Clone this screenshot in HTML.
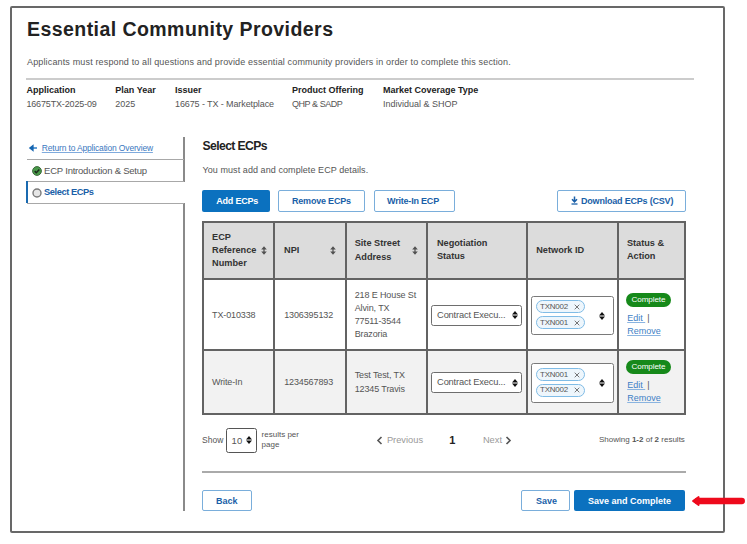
<!DOCTYPE html>
<html><head><meta charset="utf-8">
<style>
*{margin:0;padding:0;box-sizing:border-box}
html,body{width:747px;height:544px;background:#fff;overflow:hidden;font-family:"Liberation Sans",sans-serif}
.t{position:absolute;white-space:nowrap;line-height:1}
.b{font-weight:bold}
.box{position:absolute}
</style></head><body>
<!-- frame -->
<div class="box" style="left:10px;top:6px;width:715px;height:527px;border:2px solid #686868;border-radius:2px"></div>

<div id="title" class="t b" style="left:27px;top:19.5px;font-size:19.5px;color:#222;letter-spacing:0.44px">Essential Community Providers</div>
<div id="sub" class="t" style="left:27px;top:58.2px;font-size:9px;color:#555;letter-spacing:0.15px">Applicants must respond to all questions and provide essential community providers in order to complete this section.</div>
<div class="box" style="left:26px;top:78px;width:668px;height:2px;background:#ccc"></div>

<div id="m1" class="t b" style="left:26.4px;top:86.3px;font-size:9px;color:#222">Application</div>
<div id="v1" class="t" style="left:26.4px;top:99.6px;font-size:9px;color:#555;letter-spacing:-0.15px">16675TX-2025-09</div>
<div id="m2" class="t b" style="left:115.3px;top:86.3px;font-size:9px;color:#222">Plan Year</div>
<div id="v2" class="t" style="left:115.3px;top:99.6px;font-size:9px;color:#555">2025</div>
<div id="m3" class="t b" style="left:175px;top:86.3px;font-size:9px;color:#222">Issuer</div>
<div id="v3" class="t" style="left:175px;top:99.6px;font-size:9px;color:#555;letter-spacing:-0.1px">16675 - TX - Marketplace</div>
<div id="m4" class="t b" style="left:292px;top:86.3px;font-size:9px;color:#222">Product Offering</div>
<div id="v4" class="t" style="left:292px;top:99.6px;font-size:9px;color:#555;letter-spacing:-0.45px">QHP &amp; SADP</div>
<div id="m5" class="t b" style="left:383px;top:86.3px;font-size:9px;color:#222">Market Coverage Type</div>
<div id="v5" class="t" style="left:383px;top:99.6px;font-size:9px;color:#555">Individual &amp; SHOP</div>

<!-- sidebar -->
<div class="box" style="left:183.3px;top:137px;width:1.6px;height:44.5px;background:#8a8a8a"></div>
<div class="box" style="left:183.3px;top:203px;width:1.6px;height:308px;background:#8a8a8a"></div>
<div class="box" style="left:27px;top:158.5px;width:157px;height:1.5px;background:#a8a8a8"></div>
<div class="box" style="left:27px;top:180.5px;width:157px;height:1.5px;background:#a8a8a8"></div>
<div class="box" style="left:27px;top:202.5px;width:157px;height:1.5px;background:#a8a8a8"></div>
<div class="box" style="left:26px;top:181px;width:2px;height:22px;background:#1a6ab0"></div>
<svg class="box" style="left:28px;top:143px" width="10" height="10" viewBox="0 0 10 10"><path d="M9 5H4" stroke="#3b86cc" stroke-width="1.6"/><path d="M5.6 1.2L0.8 5L5.6 8.8Z" fill="#1565b0"/></svg>
<div id="s1" class="t" style="left:41.8px;top:143.9px;font-size:8.5px;letter-spacing:-0.17px;color:#3a78c0;text-decoration:underline;text-decoration-color:#7faadc">Return to Application Overview</div>
<svg class="box" style="left:32px;top:166px" width="10" height="10" viewBox="0 0 10 10"><circle cx="5" cy="5" r="4.4" fill="#4a9a4a" stroke="#3d6b3d" stroke-width="1"/><path d="M2.7 5.1L4.3 6.7L7.3 3.6" stroke="#1b2a1b" stroke-width="1.5" fill="none"/></svg>
<div id="s2" class="t" style="left:44.1px;top:166.2px;font-size:9.5px;letter-spacing:-0.22px;color:#555">ECP Introduction &amp; Setup</div>
<svg class="box" style="left:32px;top:188px" width="10" height="10" viewBox="0 0 10 10"><circle cx="5" cy="5" r="4" fill="#e6e6e6" stroke="#7a7a7a" stroke-width="1.4"/></svg>
<div id="s3" class="t b" style="left:44.1px;top:188.1px;font-size:9.3px;letter-spacing:-0.45px;color:#1a5fa8">Select ECPs</div>

<!-- main -->
<div id="h2" class="t b" style="left:202.5px;top:139.5px;font-size:12.2px;letter-spacing:-0.6px;color:#222">Select ECPs</div>
<div id="p1" class="t" style="left:202.5px;top:165.8px;font-size:9px;color:#555;letter-spacing:0.07px">You must add and complete ECP details.</div>


<!-- buttons -->
<div class="box" style="left:202px;top:190px;width:67.5px;height:22px;background:#0b71bf;border-radius:2px"></div>
<div id="bt1" class="t b" style="left:216.2px;top:196.5px;font-size:9px;color:#fff;letter-spacing:-0.2px">Add ECPs</div>
<div class="box" style="left:278px;top:190px;width:87px;height:22px;border:1.8px solid #7aaedb;border-radius:2px"></div>
<div id="bt2" class="t b" style="left:292px;top:196.5px;font-size:9px;color:#1a5fa8;letter-spacing:-0.2px">Remove ECPs</div>
<div class="box" style="left:373.5px;top:190px;width:81px;height:22px;border:1.8px solid #7aaedb;border-radius:2px"></div>
<div id="bt3" class="t b" style="left:387px;top:196.5px;font-size:9px;color:#1a5fa8;letter-spacing:-0.2px">Write-In ECP</div>
<div class="box" style="left:557px;top:190px;width:128.5px;height:22px;border:1.8px solid #7aaedb;border-radius:2px"></div>
<div id="bt4" class="t b" style="left:581px;top:196.5px;font-size:9px;color:#1a5fa8;letter-spacing:-0.2px">Download ECPs (CSV)</div>

<svg class="box" style="left:570.5px;top:196px" width="7" height="9" viewBox="0 0 7 9"><path d="M3.5 0.5V5.5M1 3.2L3.5 5.8L6 3.2" stroke="#1a5fa8" stroke-width="1.5" fill="none"/><path d="M0.5 8H6.5" stroke="#1a5fa8" stroke-width="1.3"/></svg>
<!-- table -->
<div class="box" style="left:202px;top:221px;width:483.5px;height:57.5px;background:#dcdcdc"></div>
<div class="box" style="left:202px;top:349.5px;width:483.5px;height:64px;background:#f2f2f2"></div>
<div class="box" style="left:202px;top:220.5px;width:484px;height:194px;border:2px solid #636363"></div>
<div class="box" style="left:202px;top:277.5px;width:484px;height:2px;background:#636363"></div>
<div class="box" style="left:202px;top:348.7px;width:484px;height:2px;background:#636363"></div>
<div class="box" style="left:272.8px;top:221px;width:2px;height:193px;background:#636363"></div>
<div class="box" style="left:344.8px;top:221px;width:2px;height:193px;background:#636363"></div>
<div class="box" style="left:425.6px;top:221px;width:2px;height:193px;background:#636363"></div>
<div class="box" style="left:525.8px;top:221px;width:2px;height:193px;background:#636363"></div>
<div class="box" style="left:616.5px;top:221px;width:2px;height:193px;background:#636363"></div>
<div id="th1a" class="t b" style="left:212px;top:232.9px;font-size:9.2px;color:#333;">ECP</div>
<div id="th1b" class="t b" style="left:212px;top:246.3px;font-size:9.2px;color:#333;">Reference</div>
<div id="th1c" class="t b" style="left:212px;top:259.4px;font-size:9.2px;color:#333;">Number</div>
<div id="th2" class="t b" style="left:284px;top:246.3px;font-size:9.2px;color:#333;">NPI</div>
<div id="th3a" class="t b" style="left:354.7px;top:239.4px;font-size:9.2px;color:#333;">Site Street</div>
<div id="th3b" class="t b" style="left:354.7px;top:252.5px;font-size:9.2px;color:#333;">Address</div>
<div id="th4a" class="t b" style="left:436.9px;top:239.3px;font-size:9.2px;color:#333;">Negotiation</div>
<div id="th4b" class="t b" style="left:436.9px;top:252.4px;font-size:9.2px;color:#333;">Status</div>
<div id="th5" class="t b" style="left:536.2px;top:246.4px;font-size:9.2px;color:#333;">Network ID</div>
<div id="th6a" class="t b" style="left:626.9px;top:239.3px;font-size:9.2px;color:#333;">Status &amp;</div>
<div id="th6b" class="t b" style="left:626.9px;top:252.4px;font-size:9.2px;color:#333;">Action</div>
<svg class="box" style="left:260.9px;top:245.5px" width="6" height="9" viewBox="0 0 6 9"><path d="M3 0.3L5.8 3.6H3.6V5.4H5.8L3 8.7L0.2 5.4H2.4V3.6H0.2Z" fill="#505050"/></svg>
<svg class="box" style="left:329.5px;top:245.5px" width="6" height="9" viewBox="0 0 6 9"><path d="M3 0.3L5.8 3.6H3.6V5.4H5.8L3 8.7L0.2 5.4H2.4V3.6H0.2Z" fill="#505050"/></svg>
<svg class="box" style="left:412.4px;top:245.5px" width="6" height="9" viewBox="0 0 6 9"><path d="M3 0.3L5.8 3.6H3.6V5.4H5.8L3 8.7L0.2 5.4H2.4V3.6H0.2Z" fill="#505050"/></svg>
<div id="r1c1" class="t" style="left:212px;top:310.8px;font-size:9px;color:#555;letter-spacing:-0.12px;">TX-010338</div>
<div id="r1c2" class="t" style="left:284.2px;top:310.8px;font-size:9px;color:#555;letter-spacing:-0.12px;">1306395132</div>
<div id="r1a0" class="t" style="left:354.7px;top:291.0px;font-size:9px;color:#555;letter-spacing:-0.12px;">218 E House St</div>
<div id="r1a1" class="t" style="left:354.7px;top:304.1px;font-size:9px;color:#555;letter-spacing:-0.12px;">Alvin, TX</div>
<div id="r1a2" class="t" style="left:354.7px;top:317.2px;font-size:9px;color:#555;letter-spacing:-0.12px;">77511-3544</div>
<div id="r1a3" class="t" style="left:354.7px;top:330.3px;font-size:9px;color:#555;letter-spacing:-0.12px;">Brazoria</div>
<div id="r2c1" class="t" style="left:212px;top:377.9px;font-size:9px;color:#555;letter-spacing:-0.12px;">Write-In</div>
<div id="r2c2" class="t" style="left:284.2px;top:377.9px;font-size:9px;color:#555;letter-spacing:-0.12px;">1234567893</div>
<div id="r2a0" class="t" style="left:354.7px;top:371.4px;font-size:9px;color:#555;letter-spacing:-0.12px;">Test Test, TX</div>
<div id="r2a1" class="t" style="left:354.7px;top:384.5px;font-size:9px;color:#555;letter-spacing:-0.12px;">12345 Travis</div>
<div class="box" style="left:431.3px;top:304.5px;width:91px;height:21px;border:1.7px solid #6e6e6e;border-radius:2.5px;background:#fff"></div>
<div id="sel0" class="t" style="left:437.1px;top:310.6px;font-size:9.3px;color:#555;letter-spacing:-0.18px;">Contract Execu...</div>
<svg class="box" style="left:512px;top:311.2px" width="6" height="8" viewBox="0 0 6 8"><path d="M3 0L6 3.4H0Z M3 8L6 4.6H0Z" fill="#111"/></svg>
<div class="box" style="left:531px;top:295.5px;width:83px;height:39.5px;border:1.8px solid #7a7a7a;border-radius:2.5px;background:#fff"></div>
<div class="box" style="left:535.8px;top:300.4px;width:49px;height:13px;border:1.5px solid #80bce6;border-radius:7px;background:#eef6fc"></div>
<div id="chip00" class="t" style="left:540px;top:303.0px;font-size:8px;color:#555;letter-spacing:-0.25px;">TXN002</div>
<svg class="box" style="left:573.8px;top:304.0px" width="6" height="6" viewBox="0 0 6 6"><path d="M.7 .7L5.3 5.3M5.3 .7L.7 5.3" stroke="#666" stroke-width=".9"/></svg>
<div class="box" style="left:535.8px;top:316.09999999999997px;width:49px;height:13px;border:1.5px solid #80bce6;border-radius:7px;background:#eef6fc"></div>
<div id="chip01" class="t" style="left:540px;top:318.7px;font-size:8px;color:#555;letter-spacing:-0.25px;">TXN001</div>
<svg class="box" style="left:573.8px;top:319.7px" width="6" height="6" viewBox="0 0 6 6"><path d="M.7 .7L5.3 5.3M5.3 .7L.7 5.3" stroke="#666" stroke-width=".9"/></svg>
<svg class="box" style="left:598.8px;top:311.7px" width="6" height="8" viewBox="0 0 6 8"><path d="M3 0L6 3.4H0Z M3 8L6 4.6H0Z" fill="#111"/></svg>
<div class="box" style="left:626.2px;top:292.8px;width:44.4px;height:13.8px;background:#16891a;border-radius:7px"></div>
<div id="badge0" class="t" style="left:631.5px;top:295.8px;font-size:8.1px;color:#fff;letter-spacing:-0.1px">Complete</div>
<div id="edit0" class="t" style="left:627.2px;top:313.8px;font-size:9px;color:#3f7fc6;text-decoration:underline;text-decoration-color:#8ab4e0">Edit&nbsp;</div>
<div id="bar0" class="t" style="left:647.2px;top:313.8px;font-size:9px;color:#555;">|</div>
<div id="rem0" class="t" style="left:627.2px;top:326.7px;font-size:9px;color:#3f7fc6;text-decoration:underline;text-decoration-color:#8ab4e0">Remove</div>
<div class="box" style="left:431.3px;top:372.0px;width:91px;height:21px;border:1.7px solid #6e6e6e;border-radius:2.5px;background:#fff"></div>
<div id="sel1" class="t" style="left:437.1px;top:378.1px;font-size:9.3px;color:#555;letter-spacing:-0.18px;">Contract Execu...</div>
<svg class="box" style="left:512px;top:378.7px" width="6" height="8" viewBox="0 0 6 8"><path d="M3 0L6 3.4H0Z M3 8L6 4.6H0Z" fill="#111"/></svg>
<div class="box" style="left:531px;top:363.0px;width:83px;height:39.5px;border:1.8px solid #7a7a7a;border-radius:2.5px;background:#fff"></div>
<div class="box" style="left:535.8px;top:367.9px;width:49px;height:13px;border:1.5px solid #80bce6;border-radius:7px;background:#eef6fc"></div>
<div id="chip10" class="t" style="left:540px;top:370.5px;font-size:8px;color:#555;letter-spacing:-0.25px;">TXN001</div>
<svg class="box" style="left:573.8px;top:371.5px" width="6" height="6" viewBox="0 0 6 6"><path d="M.7 .7L5.3 5.3M5.3 .7L.7 5.3" stroke="#666" stroke-width=".9"/></svg>
<div class="box" style="left:535.8px;top:383.59999999999997px;width:49px;height:13px;border:1.5px solid #80bce6;border-radius:7px;background:#eef6fc"></div>
<div id="chip11" class="t" style="left:540px;top:386.2px;font-size:8px;color:#555;letter-spacing:-0.25px;">TXN002</div>
<svg class="box" style="left:573.8px;top:387.2px" width="6" height="6" viewBox="0 0 6 6"><path d="M.7 .7L5.3 5.3M5.3 .7L.7 5.3" stroke="#666" stroke-width=".9"/></svg>
<svg class="box" style="left:598.8px;top:379.2px" width="6" height="8" viewBox="0 0 6 8"><path d="M3 0L6 3.4H0Z M3 8L6 4.6H0Z" fill="#111"/></svg>
<div class="box" style="left:626.2px;top:360.3px;width:44.4px;height:13.8px;background:#16891a;border-radius:7px"></div>
<div id="badge1" class="t" style="left:631.5px;top:363.3px;font-size:8.1px;color:#fff;letter-spacing:-0.1px">Complete</div>
<div id="edit1" class="t" style="left:627.2px;top:381.3px;font-size:9px;color:#3f7fc6;text-decoration:underline;text-decoration-color:#8ab4e0">Edit&nbsp;</div>
<div id="bar1" class="t" style="left:647.2px;top:381.3px;font-size:9px;color:#555;">|</div>
<div id="rem1" class="t" style="left:627.2px;top:394.2px;font-size:9px;color:#3f7fc6;text-decoration:underline;text-decoration-color:#8ab4e0">Remove</div>
<div id="show" class="t" style="left:202.1px;top:435.7px;font-size:8.5px;color:#555;">Show</div>
<div class="box" style="left:226px;top:427.6px;width:31px;height:25.8px;border:1.5px solid #555;border-radius:2.5px"></div>
<div id="ten" class="t" style="left:231.6px;top:435.6px;font-size:9.5px;color:#555;">10</div>
<svg class="box" style="left:245.9px;top:436.4px" width="6" height="8" viewBox="0 0 6 8"><path d="M3 0L6 3.4H0Z M3 8L6 4.6H0Z" fill="#111"/></svg>
<div id="rpp1" class="t" style="left:261.6px;top:430.7px;font-size:8px;color:#555;">results per</div>
<div id="rpp2" class="t" style="left:261.6px;top:441.4px;font-size:8px;color:#555;">page</div>
<svg class="box" style="left:376px;top:436px" width="7" height="9" viewBox="0 0 7 9"><path d="M5.5 1L2 4.5L5.5 8" stroke="#555" stroke-width="1.6" fill="none"/></svg>
<div id="prev" class="t" style="left:386.9px;top:435.6px;font-size:9.3px;color:#999;">Previous</div>
<div id="one" class="t b" style="left:449.2px;top:434.7px;font-size:11px;color:#222;">1</div>
<div id="next" class="t" style="left:482.9px;top:435.6px;font-size:9.3px;color:#999;">Next</div>
<svg class="box" style="left:505px;top:436px" width="7" height="9" viewBox="0 0 7 9"><path d="M1.5 1L5 4.5L1.5 8" stroke="#555" stroke-width="1.6" fill="none"/></svg>
<div id="showing" class="t" style="left:599px;top:436.2px;font-size:8px;color:#555;">Showing <b>1-2</b> of <b>2</b> results</div>
<div class="box" style="left:202px;top:471px;width:484px;height:1.6px;background:#aaa"></div>
<div class="box" style="left:202px;top:490.3px;width:49.7px;height:21px;border:1.8px solid #7aaedb;border-radius:2px"></div>
<div id="back" class="t b" style="left:216px;top:497.0px;font-size:9px;color:#1a5fa8;">Back</div>
<div class="box" style="left:521.4px;top:490.3px;width:48.7px;height:21px;border:1.8px solid #7aaedb;border-radius:2px"></div>
<div id="save" class="t b" style="left:536px;top:497.0px;font-size:9px;color:#1a5fa8;">Save</div>
<div class="box" style="left:574.4px;top:490.3px;width:111.1px;height:21px;background:#0b71bf;border-radius:2px"></div>
<div id="sac" class="t b" style="left:588px;top:497.0px;font-size:9px;color:#fff;">Save and Complete</div>
<svg class="box" style="left:688px;top:492px" width="59" height="18" viewBox="0 0 59 18"><path d="M9.5 9H53.8" stroke="#ee0a1c" stroke-width="6.3" stroke-linecap="round"/><path d="M5 9L10.6 5V13Z" fill="#ee0a1c" stroke="#ee0a1c" stroke-width="1.8" stroke-linejoin="round"/></svg>
</body></html>
